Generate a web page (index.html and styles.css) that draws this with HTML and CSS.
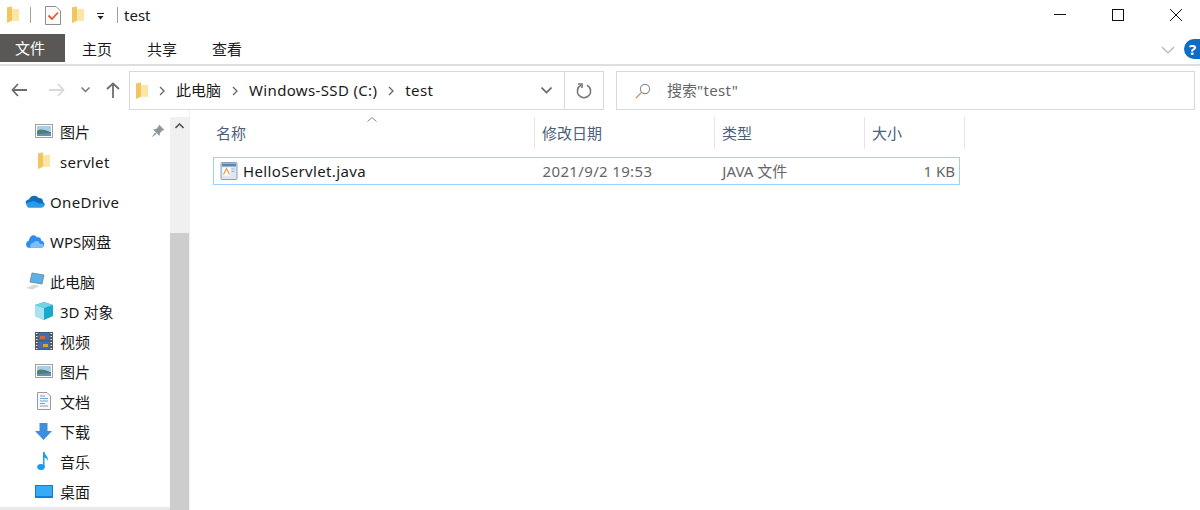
FILE: index.html
```html
<!DOCTYPE html>
<html>
<head>
    <meta charset="UTF-8">
    <title>test</title>
    <link rel="stylesheet" href="styles.css">
</head>
<body>
<svg class="defs" width="0" height="0">
    <defs>
        <symbol id="folder" viewBox="0 0 14 18">
            <path d="M1 1.5 L6 0.5 L6 3 L13 3 L13 14.5 L6 14.5 L1 17 Z" fill="#f7d98a"/>
            <path d="M1 1.5 L6 0.5 L6 14.5 L1 17 Z" fill="#efc75e"/>
            <path d="M6 3 L13 3 L13 14.5 L6 14.5 Z" fill="#fde6a5"/>
        </symbol>
        <symbol id="picture" viewBox="0 0 18 14">
            <rect x="0.5" y="0.5" width="17" height="13" fill="#fff" stroke="#a0a0a0"/>
            <rect x="2" y="2" width="14" height="5" fill="#a8d0ee"/>
            <path d="M2 7 C6 4 9 6 16 8 L16 12 L2 12 Z" fill="#4f7f72"/>
            <path d="M2 10 L16 9 L16 12 L2 12 Z" fill="#5c93c4"/>
        </symbol>
    </defs>
</svg>

<!-- title bar -->
<div class="titlebar">
    <svg class="tb-folder" width="14" height="18"><use href="#folder"/></svg>
    <span class="tb-sep"></span>
    <svg class="tb-check" width="16" height="19" viewBox="0 0 16 19">
        <path d="M0.5 0.5 L11 0.5 L15.5 5 L15.5 18.5 L0.5 18.5 Z" fill="#fbfbfb" stroke="#8d8d8d"/>
        <path d="M3.5 9.5 L7 13 L13 6.5" fill="none" stroke="#e8582a" stroke-width="1.8"/>
    </svg>
    <svg class="tb-folder2" width="14" height="18"><use href="#folder"/></svg>
    <svg class="tb-drop" width="8" height="7" viewBox="0 0 8 7">
        <rect x="0" y="0" width="7" height="1" fill="#222"/>
        <path d="M0.5 3 L6.5 3 L3.5 6.5 Z" fill="#222"/>
    </svg>
    <span class="tb-sep tb-sep2"></span>
    <span class="tb-title">test</span>
    <div class="win-btns">
        <svg width="12" height="12" viewBox="0 0 12 12"><rect x="0" y="5" width="12" height="1" fill="#111"/></svg>
        <svg width="12" height="12" viewBox="0 0 12 12"><rect x="0.5" y="0.5" width="11" height="11" fill="none" stroke="#111"/></svg>
        <svg width="12" height="12" viewBox="0 0 12 12"><path d="M0 0 L12 12 M12 0 L0 12" stroke="#111" fill="none"/></svg>
    </div>
</div>

<!-- ribbon tabs -->
<div class="ribbon">
    <div class="tab tab-file">文件</div>
    <div class="tab">主页</div>
    <div class="tab">共享</div>
    <div class="tab">查看</div>
    <div class="ribbon-right">
        <svg width="14" height="8" viewBox="0 0 14 8"><path d="M1 1 L7 7 L13 1" fill="none" stroke="#b4b4b4" stroke-width="1.2"/></svg>
        <span class="help">?</span>
    </div>
</div>

<!-- address and search -->
<div class="addressrow">
    <div class="nav-btns">
        <svg class="nb-back" width="16" height="14" viewBox="0 0 16 14"><path d="M7 1 L1.5 7 L7 13 M1.5 7 L16 7" fill="none" stroke="#6d6d6d" stroke-width="1.8"/></svg>
        <svg class="nb-fwd" width="16" height="14" viewBox="0 0 16 14"><path d="M9 1 L14.5 7 L9 13 M14.5 7 L0 7" fill="none" stroke="#d9d9d9" stroke-width="1.8"/></svg>
        <svg class="nb-more" width="9" height="6" viewBox="0 0 9 6"><path d="M0.5 0.5 L4.5 4.5 L8.5 0.5" fill="none" stroke="#777" stroke-width="1.5"/></svg>
        <svg class="nb-up" width="14" height="16" viewBox="0 0 14 16"><path d="M1 7 L7 1.5 L13 7 M7 1.5 L7 16" fill="none" stroke="#6d6d6d" stroke-width="1.8"/></svg>
    </div>
    <div class="addressbox">
        <svg class="ab-folder" width="14" height="18"><use href="#folder"/></svg>
        <svg class="crumb-arrow" width="6" height="10" viewBox="0 0 6 10"><path d="M1 1 L5 5 L1 9" fill="none" stroke="#666" stroke-width="1.3"/></svg>
        <span class="crumb">此电脑</span>
        <svg class="crumb-arrow" width="6" height="10" viewBox="0 0 6 10"><path d="M1 1 L5 5 L1 9" fill="none" stroke="#666" stroke-width="1.3"/></svg>
        <span class="crumb latin">Windows-SSD (C:)</span>
        <svg class="crumb-arrow" width="6" height="10" viewBox="0 0 6 10"><path d="M1 1 L5 5 L1 9" fill="none" stroke="#666" stroke-width="1.3"/></svg>
        <span class="crumb latin">test</span>
        <div class="ab-drop">
            <svg width="11" height="7" viewBox="0 0 11 7"><path d="M0.5 0.5 L5.5 5.5 L10.5 0.5" fill="none" stroke="#666" stroke-width="1.6"/></svg>
        </div>
        <div class="ab-refresh">
            <svg width="16" height="16" viewBox="0 0 16 16"><path d="M5 2.2 A6.6 6.6 0 1 0 11 2.2" fill="none" stroke="#777" stroke-width="1.6"/><path d="M2 1 L6 1 L6 5" fill="none" stroke="#777" stroke-width="1.6"/></svg>
        </div>
    </div>
    <div class="searchbox">
        <svg width="16" height="16" viewBox="0 0 16 16"><circle cx="10" cy="6" r="4.6" fill="none" stroke="#8a8a8a" stroke-width="1.1"/><path d="M6.6 9.4 L1 15" stroke="#c98f5a" stroke-width="1.3"/></svg>
        <span class="search-text">搜索<span class="latin">"test"</span></span>
    </div>
</div>

<div class="main">
    <!-- navigation pane -->
    <div class="navpane">
        <div class="navlist">
            <div class="navrow lvl2"><span class="ico"><svg width="18" height="14"><use href="#picture"/></svg></span>图片
                <svg class="pin" width="14" height="14" viewBox="0 0 14 14"><path d="M8 0.5 L13.5 6 L11.5 6.5 L9 9 L8.5 12 L2 5.5 L5 5 L7.5 2.5 Z M4 8.5 L0.5 13.5 L5.5 10 Z" fill="#8f979e"/></svg>
            </div>
            <div class="navrow lvl2 gap-after"><span class="ico"><svg width="14" height="18"><use href="#folder"/></svg></span><span class="latin">servlet</span></div>
            <div class="navrow lvl1 gap-after"><span class="ico">
                <svg width="20" height="14" viewBox="0 0 20 14"><path d="M1 10 C0 7 2 5.5 4 5.5 C5 1.5 11 0 13.5 4 C16 3.5 18 5 18 7.5 L19.5 10 L1 10 Z" fill="#0f6fbe"/><path d="M1 9 L9 7 L14 9.5 L20 9.5 C20 12 18 13.8 16 13.8 L4 13.8 C2.5 13.8 1.2 11.5 1 9 Z" fill="#2a9be8"/></svg>
            </span><span class="latin">OneDrive</span></div>
            <div class="navrow lvl1 gap-after"><span class="ico">
                <svg width="20" height="14" viewBox="0 0 20 14"><path d="M3.8 13.8 C0.5 13.8 0 7.5 3.8 6.8 C4.5 1 10 -0.5 12 3.5 C14.5 2.5 16.5 4.5 16 6.5 C20.5 7 20 13.8 16 13.8 Z" fill="#2e8cf0"/><path d="M6 13.8 C4 12 6 8.5 9 8.5 C10.5 6 14.5 7 15 10 C17 9.5 19 10.5 18.5 11.5 C18 13 17 13.8 16 13.8 Z" fill="#7cc0fa"/></svg>
            </span>WPS网盘</div>
            <div class="navrow lvl1"><span class="ico">
                <svg width="20" height="18" viewBox="0 0 20 18"><path d="M7 1 L19 3 L17 12 L5 10 Z" fill="#58b2e8" stroke="#6b7f8f" stroke-width="0.8"/><path d="M1 16 L9 12.5 L15 14 L7 17.5 Z" fill="#d5d9dc"/></svg>
            </span>此电脑</div>
            <div class="navrow lvl2"><span class="ico">
                <svg width="18" height="18" viewBox="0 0 18 18"><path d="M9 0 L18 3 L18 14 L9 18 L0 14 L0 3 Z" fill="#19a9cf"/><path d="M0 3 L9 6 L9 18 L0 14 Z" fill="#a5e3ee"/><path d="M9 0 L18 3 L9 6 L0 3 Z" fill="#74d2e6"/></svg>
            </span>3D 对象</div>
            <div class="navrow lvl2"><span class="ico">
                <svg width="18" height="18" viewBox="0 0 18 18"><rect width="18" height="18" fill="#55585c"/><rect x="3.5" y="1" width="11" height="7.5" fill="#3f6fb0"/><rect x="3.5" y="9.5" width="11" height="7.5" fill="#3f6fb0"/><rect x="5" y="4" width="5" height="3" fill="#d8663a"/><rect x="8" y="12" width="5" height="3" fill="#e0a13a"/><path d="M1 1.5h1.5M1 4.5h1.5M1 7.5h1.5M1 10.5h1.5M1 13.5h1.5M1 16.5h1.5M15.5 1.5h1.5M15.5 4.5h1.5M15.5 7.5h1.5M15.5 10.5h1.5M15.5 13.5h1.5M15.5 16.5h1.5" stroke="#eee" stroke-width="1.2"/></svg>
            </span>视频</div>
            <div class="navrow lvl2"><span class="ico"><svg width="18" height="14"><use href="#picture"/></svg></span>图片</div>
            <div class="navrow lvl2"><span class="ico">
                <svg width="14" height="18" viewBox="0 0 14 18"><path d="M0.5 0.5 L10 0.5 L13.5 4 L13.5 17.5 L0.5 17.5 Z" fill="#f7f7f7" stroke="#9a9a9a"/><path d="M3 4h5M3 6.5h8M3 9h8M3 11.5h5M3 14h8" stroke="#6aa3d8"/></svg>
            </span>文档</div>
            <div class="navrow lvl2"><span class="ico">
                <svg width="17" height="17" viewBox="0 0 17 17"><path d="M4.5 0 L12.5 0 L12.5 8 L17 8 L8.5 17 L0 8 L4.5 8 Z" fill="#3e8ee0"/></svg>
            </span>下载</div>
            <div class="navrow lvl2"><span class="ico">
                <svg class="note" width="12" height="18" viewBox="0 0 12 18"><ellipse cx="4" cy="15" rx="3.8" ry="3" fill="#1a9bef"/><path d="M6 15 L6 0 L7.5 0 C8 3.5 11.5 4 11 9 C10 6.5 9 6 7.5 5.5 L7.5 15 Z" fill="#1a9bef"/></svg>
            </span>音乐</div>
            <div class="navrow lvl2"><span class="ico">
                <svg width="18" height="13" viewBox="0 0 18 13"><rect width="18" height="13" fill="#0f7fd8"/><rect x="1" y="1" width="16" height="10" fill="#36aaf5"/></svg>
            </span>桌面</div>
        </div>
        <div class="nav-hbar"></div>
        <div class="nav-scroll">
            <svg class="scroll-up" width="9" height="6" viewBox="0 0 9 6"><path d="M0.5 5 L4.5 1 L8.5 5" fill="none" stroke="#555" stroke-width="1.6"/></svg>
            <div class="scroll-thumb"></div>
        </div>
    </div>

    <!-- file list -->
    <div class="files">
        <svg class="sort-arrow" width="10" height="5" viewBox="0 0 10 5"><path d="M0.5 4.5 L5 0.5 L9.5 4.5" fill="none" stroke="#888"/></svg>
        <div class="cols">
            <div class="col col-name">名称</div>
            <div class="col col-date">修改日期</div>
            <div class="col col-type">类型</div>
            <div class="col col-size">大小</div>
        </div>
        <div class="filerow">
            <div class="cell col-name file-name">
                <svg width="18" height="18" viewBox="0 0 18 18"><rect x="1" y="0.5" width="16" height="17" rx="1" fill="#dfe6ef" stroke="#8aa0bc"/><rect x="2" y="1.5" width="14" height="3" fill="#5d84b8"/><rect x="2.5" y="5.5" width="8" height="8" fill="#fff"/><path d="M3.5 12.5 L6.5 6.5 L9.5 12.5" fill="none" stroke="#e89a3a" stroke-width="1.2"/><path d="M11.5 7h3M11.5 9.5h3" stroke="#8db4dc"/></svg>
                <span class="latin">HelloServlet.java</span>
            </div>
            <div class="cell col-date date-text">2021/9/2 19:53</div>
            <div class="cell col-type type-text">JAVA 文件</div>
            <div class="cell col-size">1 KB</div>
        </div>
    </div>
</div>
</body>
</html>
```

FILE: styles.css
```css
* {
    box-sizing: border-box;
}

html, body {
    margin: 0;
    height: 510px;
    overflow: hidden;
    background: #fff;
}

body {
    font-family: "Noto Sans", "Noto Sans CJK SC", sans-serif;
    font-size: 15px;
    color: #1a1a1a;
}

svg {
    display: block;
    flex: none;
}

.defs {
    position: absolute;
}

/* latin runs are set a little wider than the font's own spacing */
.latin {
    letter-spacing: 0.35px;
}

/* title bar */
.titlebar {
    height: 34px;
    display: flex;
    align-items: center;
    padding-left: 6px;
    padding-bottom: 4px;
}

.tb-sep {
    width: 1px;
    height: 16px;
    background: #a0a0a0;
    margin-left: 10px;
}

.tb-check {
    margin-left: 14px;
}

.tb-folder2 {
    margin-left: 10px;
}

.tb-drop {
    margin-left: 12px;
    margin-top: 2px;
}

.tb-sep2 {
    margin-left: 12px;
}

.tb-title {
    margin-left: 6px;
}

.win-btns {
    margin-left: auto;
    display: flex;
    align-items: center;
    gap: 46px;
    padding-right: 18px;
}

/* ribbon tabs */
.ribbon {
    height: 32px;
    display: flex;
    border-bottom: 2px solid #dedede;
}

.tab {
    width: 65px;
    height: 28px;
    display: flex;
    align-items: center;
    justify-content: center;
    padding-right: 1px;
}

.tab-file {
    background: #5a5755;
    color: #fff;
    padding: 0 5px 2px 0;
}

.ribbon-right {
    margin-left: auto;
    display: flex;
    align-items: flex-start;
    gap: 9px;
    padding-top: 5px;
}

.ribbon-right svg {
    margin-top: 7px;
}

.help {
    width: 16px;
    height: 20px;
    border-radius: 10px 0 0 10px;
    background: #0f6cc4;
    color: #fff;
    font-size: 15px;
    font-weight: bold;
    line-height: 20px;
    padding-left: 5px;
}

/* address row */
.addressrow {
    height: 44px;
    padding-top: 5px;
    display: flex;
}

.nav-btns {
    width: 129px;
    display: flex;
    align-items: center;
    padding-left: 11px;
    padding-bottom: 2px;
}

.nb-fwd {
    margin-left: 22px;
}

.nb-more {
    margin-left: 16px;
}

.nb-up {
    margin-left: 16px;
}

.addressbox {
    width: 475px;
    height: 39px;
    border: 1px solid #d9d9d9;
    display: flex;
    align-items: center;
    padding-left: 5px;
}

.crumb {
    margin-left: 11px;
    padding-bottom: 2px;
}

.ab-folder + .crumb-arrow {
    margin-left: 10px;
}

.crumb + .crumb-arrow {
    margin-left: 11px;
}

.ab-drop {
    margin-left: auto;
    width: 35px;
    height: 100%;
    display: flex;
    align-items: center;
    justify-content: center;
}

.ab-refresh {
    width: 39px;
    height: 100%;
    border-left: 1px solid #d9d9d9;
    display: flex;
    align-items: center;
    justify-content: center;
}

.searchbox {
    margin-left: 12px;
    width: 579px;
    height: 39px;
    border: 1px solid #d9d9d9;
    display: flex;
    align-items: center;
    padding-left: 18px;
}

.search-text {
    margin-left: 16px;
    padding-bottom: 2px;
    color: #666;
}

/* main area */
.main {
    height: 400px;
    display: flex;
}

.navpane {
    position: relative;
    width: 190px;
    height: 400px;
    border-right: 1px solid #f0f0f0;
    padding-top: 6px;
}

.navrow {
    height: 30px;
    display: flex;
    align-items: center;
}

.navrow .latin {
    padding-top: 2px;
}

.gap-after {
    margin-bottom: 10px;
}

.lvl1 {
    padding-left: 25px;
}

.lvl2 {
    padding-left: 35px;
}

.ico {
    width: 25px;
    display: flex;
    align-items: center;
    justify-content: flex-start;
}

.lvl2 .ico svg[width="14"],
.note {
    margin-left: 2px;
}

.pin {
    margin-left: 61px;
}

.nav-hbar {
    position: absolute;
    left: 0;
    bottom: 0;
    width: 170px;
    height: 3px;
    background: #e9e9e9;
}

.nav-scroll {
    position: absolute;
    left: 170px;
    top: 7px;
    width: 19px;
    height: 393px;
    background: #f0f0f0;
}

.scroll-up {
    margin: 6px 0 0 5px;
}

.scroll-thumb {
    position: absolute;
    top: 116px;
    bottom: 0;
    left: 0;
    right: 0;
    background: #cdcdcd;
}

/* file list */
.files {
    position: relative;
    flex: 1;
    padding: 7px 0 0 23px;
}

.sort-arrow {
    position: absolute;
    left: 177px;
    top: 7px;
}

.cols {
    display: flex;
    height: 32px;
}

.col-name {
    width: 322px;
}

.col-date {
    width: 180px;
}

.col-type {
    width: 150px;
}

.col-size {
    width: 100px;
}

.col {
    display: flex;
    align-items: center;
    padding-left: 7px;
    padding-bottom: 2px;
    color: #4c607a;
    border-right: 1px solid #e5e5e5;
}

.col-name.col {
    padding-left: 3px;
}

.filerow {
    margin-top: 8px;
    width: 747px;
    height: 28px;
    border: 1px solid #99d1ff;
    display: flex;
    align-items: center;
    color: #666;
}

.cell {
    display: flex;
    align-items: center;
    padding-left: 7px;
}

.date-text {
    letter-spacing: 0.35px;
}

.type-text {
    padding-bottom: 2px;
}

.file-name {
    width: 322px;
    padding-left: 6px;
    gap: 5px;
    color: #1a1a1a;
}

.filerow .col-size {
    width: 94px;
    justify-content: flex-end;
    padding-right: 4px;
}
```
